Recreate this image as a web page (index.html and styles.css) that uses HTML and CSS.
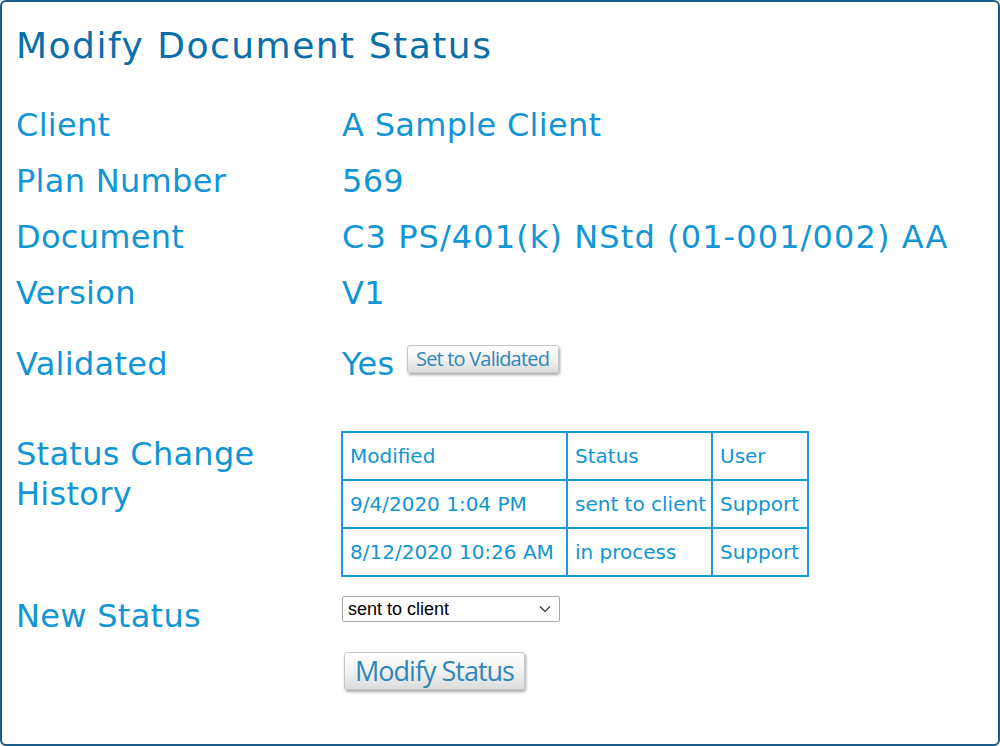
FILE: index.html
```html
<!DOCTYPE html>
<html>
<head>
<meta charset="utf-8">
<link rel="stylesheet" href="styles.css">
</head>
<body>
<div class="page">
  <h1 class="title">Modify Document Status</h1>
  <div class="form">
    <div class="label">Client</div><div class="value">A Sample Client</div>
    <div class="label">Plan Number</div><div class="value">569</div>
    <div class="label">Document</div><div class="value wide">C3 PS/401(k) NStd (01-001/002) AA</div>
    <div class="label">Version</div><div class="value">V1</div>
    <div class="label row-validated">Validated</div>
    <div class="value row-validated">Yes <button class="btn btn-small">Set to Validated</button></div>
    <div class="label row-history">Status Change History</div>
    <div class="value row-history">
      <table class="history">
        <colgroup><col class="c1"><col class="c2"><col class="c3"></colgroup>
        <tr><td>Modified</td><td>Status</td><td>User</td></tr>
        <tr><td>9/4/2020 1:04 PM</td><td>sent to client</td><td>Support</td></tr>
        <tr><td>8/12/2020 10:26 AM</td><td>in process</td><td>Support</td></tr>
      </table>
    </div>
    <div class="label row-new">New Status</div>
    <div class="value row-new">
      <div class="select"><span>sent to client</span>
        <svg class="chev" width="12" height="8" viewBox="0 0 12 8"><path d="M1 1.5 L6 6.5 L11 1.5" fill="none" stroke="#333" stroke-width="1.2"/></svg>
      </div>
      <button class="btn btn-big">Modify Status</button>
    </div>
  </div>
</div>
</body>
</html>
```
FILE: styles.css
```css
html, body {
  margin: 0;
  padding: 0;
  background: #ffffff;
}
.page {
  box-sizing: border-box;
  width: 1000px;
  height: 746px;
  border: 2px solid #1b5c8a;
  border-radius: 6px;
  padding: 0 14px;
  font-family: "DejaVu Sans", Verdana, sans-serif;
  color: #1195d4;
  overflow: hidden;
}
.title {
  margin: 22px 0 0 0;
  font-size: 36px;
  letter-spacing: 1.5px;
  line-height: 44px;
  font-weight: normal;
  color: #0a6eaa;
}
.form {
  display: grid;
  grid-template-columns: 326px 1fr;
  margin-top: 29px;
  font-size: 32px;
  letter-spacing: 0.3px;
}
.label, .value {
  line-height: 56px;
  white-space: nowrap;
}
.value.wide {
  letter-spacing: 1.1px;
}
.row-validated {
  margin-top: 15px;
  display: flex;
  align-items: baseline;
}
.row-history.label {
  margin-top: 42px;
  line-height: 40px;
  white-space: normal;
  width: 270px;
}
.row-history.value {
  margin-top: 39px;
  line-height: normal;
}
.row-new.label {
  margin-top: 11px;
}
.row-new.value {
  padding-top: 19px;
  line-height: normal;
  display: flex;
  flex-direction: column;
  align-items: flex-start;
}
.btn {
  font-family: "Open Sans", sans-serif;
  color: #2f86b9;
  background: linear-gradient(#ffffff, #f4f4f4 45%, #dcdcdc);
  border: 1px solid #c6c6c6;
  border-radius: 3px;
  box-shadow: 1px 2px 3px rgba(0, 0, 0, 0.35);
  padding: 0;
  cursor: pointer;
}
.btn-small {
  margin-left: 12px;
  width: 152px;
  height: 28px;
  font-size: 20px;
  letter-spacing: -0.8px;
  line-height: 24px;
  position: relative;
  top: -9px;
}
.btn-big {
  margin-top: 30px;
  margin-left: 2px;
  width: 181px;
  height: 38px;
  font-size: 27px;
  letter-spacing: -1px;
  line-height: 32px;
}
.history {
  border-collapse: collapse;
  table-layout: fixed;
  width: 466px;
  font-size: 20px;
  letter-spacing: 0;
  margin-left: -1px;
}
.history col.c1 { width: 225px; }
.history col.c2 { width: 145px; }
.history col.c3 { width: 96px; }
.history td {
  border: 2px solid #1a9ad6;
  height: 46px;
  padding: 0 0 0 7px;
  white-space: nowrap;
  overflow: hidden;
  vertical-align: middle;
}
.select {
  box-sizing: border-box;
  width: 218px;
  height: 26px;
  border: 1px solid #a9a9a9;
  border-radius: 2px;
  display: flex;
  align-items: center;
  justify-content: space-between;
  padding: 0 8px 0 5px;
  font-family: "Liberation Sans", Arial, sans-serif;
  font-size: 18px;
  letter-spacing: 0;
  color: #000;
}
```
